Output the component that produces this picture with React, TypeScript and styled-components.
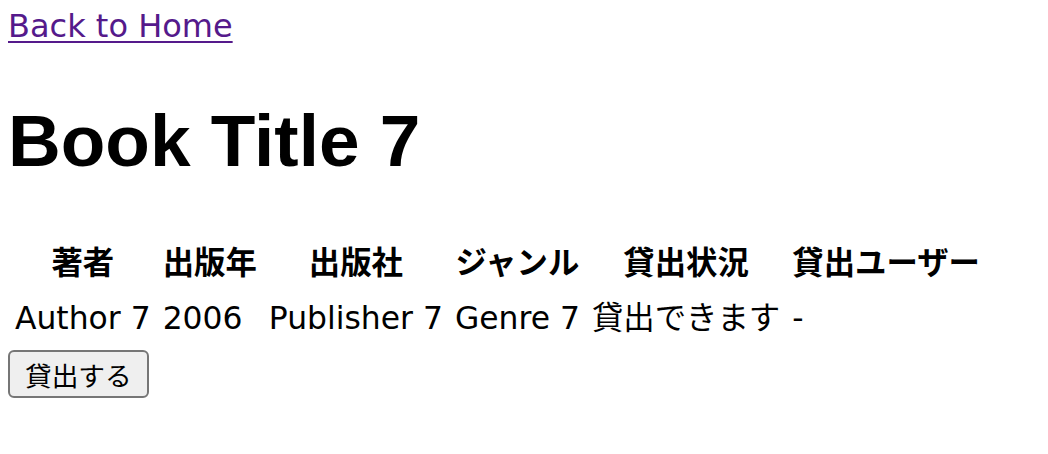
import styled, { createGlobalStyle } from 'styled-components';

const GlobalStyle = createGlobalStyle`
  body {
    margin: 8px;
    background: #ffffff;
    color: #000000;
    font-family: 'DejaVu Sans', 'Noto Sans CJK JP', sans-serif;
    font-size: 32px;
  }
`;

const Page = styled.div`
  display: flex;
  flex-direction: column;
  align-items: flex-start;
`;

// Nav
//
const BackLink = styled.a`
  display: block;
  line-height: 37px;
  color: #551a8b;
  text-decoration: underline;
  text-underline-offset: 4px;
  text-decoration-thickness: 2px;
`;

// Title
//
const Title = styled.h1`
  margin: 56px 0 55px;
  font-family: 'Liberation Sans', 'Noto Sans CJK JP', sans-serif;
  font-size: 73px;
  line-height: 80px;
  font-weight: 700;
`;

// Details table
//
const DetailTable = styled.table`
  border-collapse: separate;
  border-spacing: 2px;
  font-size: 31.4px;
`;

const HeaderCell = styled.th`
  padding: 1px 5px;
  line-height: 48px;
  font-weight: 700;
  text-align: center;
  white-space: nowrap;
`;

const Cell = styled.td`
  padding: 4px 5px 1px;
  line-height: 48px;
  text-align: left;
  white-space: nowrap;
`;

const LendButton = styled.button`
  margin-top: 5px;
  height: 48px;
  padding: 0 15px;
  font-family: 'Noto Sans CJK JP', sans-serif;
  font-size: 26.7px;
  color: #000000;
  background-color: #efefef;
  border: 2px solid #767676;
  border-radius: 6px;
  cursor: pointer;
`;

const book = {
  title: 'Book Title 7',
  author: 'Author 7',
  year: 2006,
  publisher: 'Publisher 7',
  genre: 'Genre 7',
  status: '貸出できます',
  borrower: '-',
};

const headers = ['著者', '出版年', '出版社', 'ジャンル', '貸出状況', '貸出ユーザー'];

export default function App() {
  return (
    <>
      <GlobalStyle />
      <Page>
        <BackLink href="#">Back to Home</BackLink>
        <Title>{book.title}</Title>
        <DetailTable>
          <thead>
            <tr>
              {headers.map((h) => (
                <HeaderCell key={h}>{h}</HeaderCell>
              ))}
            </tr>
          </thead>
          <tbody>
            <tr>
              <Cell>{book.author}</Cell>
              <Cell>{book.year}</Cell>
              <Cell>{book.publisher}</Cell>
              <Cell>{book.genre}</Cell>
              <Cell>{book.status}</Cell>
              <Cell>{book.borrower}</Cell>
            </tr>
          </tbody>
        </DetailTable>
        <LendButton type="button">貸出する</LendButton>
      </Page>
    </>
  );
}
